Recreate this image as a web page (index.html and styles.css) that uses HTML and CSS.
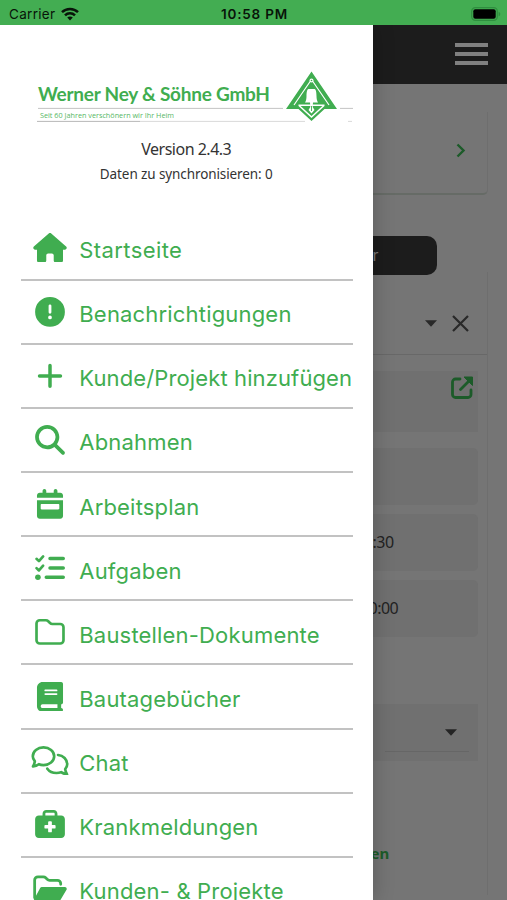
FILE: index.html
```html
<!DOCTYPE html>
<html lang="de">
<head>
<meta charset="utf-8">
<title>Werner Ney &amp; Söhne GmbH</title>
<link rel="stylesheet" href="styles.css">
</head>
<body>
<header class="status">
  <div class="carrier">Carrier
    <svg width="18" height="14" viewBox="0 0 18 14" fill="none" stroke="#081409" stroke-width="2.5"><path d="M1 5.2C5.4.8 12.6.8 17 5.2M4 8.3c2.8-2.8 7.2-2.8 10 0"/><path d="M9 13.4 6.2 10.6c1.6-1.5 4-1.5 5.6 0z" fill="#081409" stroke="none"/></svg>
  </div>
  <div class="clock">10:58 PM</div>
  <div class="power">
    <svg width="30" height="14" viewBox="0 0 30 14"><rect x=".7" y=".7" width="25.6" height="12.6" rx="3.6" fill="none" stroke="#2f8f3f" stroke-width="1.2"/><rect x="2.3" y="2.3" width="22.4" height="9.4" rx="2" fill="#000"/><path d="M27.6 4.7c2.2.8 2.2 3.8 0 4.6z" fill="#2f8f3f"/></svg>
  </div>
</header>
<div class="stage">
  <aside class="drawer">
    <div class="brand">
      <svg width="317" height="54" viewBox="0 0 317 54">
        <path d="M1 37.4h245M303 37.4h13" stroke="#b5b5b5" stroke-width=".8"/>
        <path d="M0 50.4h103" stroke="#a5a5a5" stroke-width=".8"/><path d="M103 50.4h165M311 50.4h4" stroke="#cfcfcf" stroke-width=".8"/>
        <text class="brand-name" x="1" y="30" textLength="232" lengthAdjust="spacing">Werner Ney &amp; Söhne GmbH</text>
        <text class="brand-claim" x="3" y="47" textLength="134" lengthAdjust="spacingAndGlyphs">Seit 60 Jahren verschönern wir Ihr Heim</text>
        <path d="M274.500.500 300 38h-12.500L274.500 50 261.500 38H249z" fill="#40ad50"/>
        <path d="M274.500 8.500 257 34M274.500 8.500 292 34" fill="none" stroke="#fff" stroke-width="1.200"/>
        <path d="M261.500 34.200h26M262 34.500l12.500 11.500L287 34.500" fill="none" stroke="#fff" stroke-width="1.500"/>
        <circle cx="274.500" cy="9.500" r="2" fill="#fff"/><circle cx="274.500" cy="9.500" r=".8" fill="#40ad50"/>
        <path d="M271.500 18h6c1.600 0 2 4 2 7 0 3 .5 5 1.500 6.500h-13c1-1.500 1.500-3.500 1.500-6.500 0-3 .4-7 2-7z" fill="#fff"/>
        <path d="M273 31h3l-.3 5 1.800 3-3 3.500-3-3.500 1.800-3z" fill="#fff"/>
        <path d="M274.500 35v5" stroke="#40ad50" stroke-width=".9"/>
      </svg>
    </div>
    <p class="version">Version 2.4.3</p>
    <p class="sync">Daten zu synchronisieren: 0</p>
    <nav class="menu">
      <a class="item first"><svg class="icon" viewBox="-56 0 688 512"><path d="M575.800 255.500c0 18-15 32.100-32 32.100h-32V472c0 22.100-17.900 40-40 40H392c-22.100 0-40-17.900-40-40v-88c0-17.700-14.300-32-32-32h-64c-17.700 0-32 14.300-32 32v88c0 22.100-17.900 40-40 40h-80c-22.100 0-40-17.900-40-40V287.600H32c-18 0-32-14-32-32.100 0-9 3-17 10-24L266.400 8c7-7 15-8 22-8s15 2 21 7L564.800 231.500c8 7 12 15 11 24z"/></svg><span>Startseite</span></a>
      <a class="item"><svg class="icon" viewBox="-88 0 688 512"><path fill-rule="evenodd" d="M256 512a256 256 0 1 0 0-512 256 256 0 1 0 0 512zm0-384c13.300 0 24 10.700 24 24v112a24 24 0 0 1-48 0V152c0-13.300 10.700-24 24-24zm-32 224a32 32 0 1 1 64 0 32 32 0 1 1-64 0z"/></svg><span>Benachrichtigungen</span></a>
      <a class="item project"><svg class="icon" viewBox="-88 0 688 512"><path d="M256 76v360M76 256h360" fill="none" stroke="currentColor" stroke-width="60" stroke-linecap="round"/></svg><span>Kunde/Projekt hinzufügen</span></a>
      <a class="item"><svg class="icon" viewBox="-88 0 688 512"><path fill-rule="evenodd" d="M416 208c0 45.900-14.900 88.300-40 122.700l126.600 126.700c12.500 12.500 12.500 32.800 0 45.300s-32.800 12.500-45.300 0L330.700 376c-34.400 25.200-76.800 40-122.700 40C93.100 416 0 322.900 0 208S93.100 0 208 0s208 93.100 208 208zM208 352a144 144 0 1 0 0-288 144 144 0 1 0 0 288z"/></svg><span>Abnahmen</span></a>
      <a class="item"><svg class="icon" viewBox="-120 0 688 512"><path fill-rule="evenodd" d="M128 0c17.700 0 32 14.300 32 32v32h128V32c0-17.700 14.300-32 32-32s32 14.300 32 32v32h48c26.500 0 48 21.500 48 48v40H0v-40c0-26.500 21.500-48 48-48h48V32c0-17.700 14.300-32 32-32zM0 192h448v272c0 26.500-21.500 48-48 48H48c-26.500 0-48-21.500-48-48V192zm80 64c-8.800 0-16 7.200-16 16v64c0 8.800 7.200 16 16 16h288c8.800 0 16-7.200 16-16v-64c0-8.800-7.200-16-16-16H80z"/></svg><span>Arbeitsplan</span></a>
      <a class="item"><svg class="icon" viewBox="-88 0 688 512"><g fill="none" stroke="currentColor" stroke-linecap="round" stroke-linejoin="round"><path d="M256 96h228M256 256h228M192 416h292" stroke-width="60"/><path d="m24 100 42 40 72-82M24 260l42 40 72-82" stroke-width="46"/></g><circle cx="48" cy="416" r="48"/></svg><span>Aufgaben</span></a>
      <a class="item"><svg class="icon" viewBox="-88 0 688 512"><path d="M80 56h106c15 0 29 6 40 17l30 30c11 11 25 17 40 17h136c31 0 56 25 56 56v224c0 31-25 56-56 56H80c-31 0-56-25-56-56V112c0-31 25-56 56-56z" fill="none" stroke="currentColor" stroke-width="46"/></svg><span>Baustellen-Dokumente</span></a>
      <a class="item"><svg class="icon" viewBox="-120 0 688 512"><path fill-rule="evenodd" d="M96 0C43 0 0 43 0 96v320c0 53 43 96 96 96h320c17.700 0 32-14.300 32-32s-14.300-32-32-32v-64c17.700 0 32-14.300 32-32V32c0-17.700-14.300-32-32-32H96zm0 384h256v64H96c-17.700 0-32-14.300-32-32s14.300-32 32-32zm32-240c0-8.800 7.200-16 16-16h192a16 16 0 0 1 0 32H144c-8.800 0-16-7.200-16-16zm16 48h192a16 16 0 0 1 0 32H144a16 16 0 0 1 0-32z"/></svg><span>Bautagebücher</span></a>
      <a class="item"><svg class="icon" viewBox="-24 0 688 512"><g fill="none" stroke="currentColor" stroke-width="46" stroke-linejoin="round" stroke-linecap="round"><path d="M59 262c-22-24-35-54-35-86C24 92 106 24 208 24s184 68 184 152-82 152-184 152c-29 0-56-5-80-15-28 21-64 35-101 39 15-24 28-57 32-90z"/><path d="M458 154c91 9 158 78 158 158 0 33-13 62-35 86 4 33 17 66 32 90-37-4-73-18-101-39-24 10-51 15-80 15-67 0-126-29-158-74"/></g></svg><span>Chat</span></a>
      <a class="item"><svg class="icon" viewBox="-88 0 688 512"><path fill-rule="evenodd" d="M128 96V64c0-35 29-64 64-64h128c35 0 64 29 64 64v32h64c35.300 0 64 28.700 64 64v256c0 35.300-28.700 64-64 64H64c-35.300 0-64-28.700-64-64V160c0-35.300 28.700-64 64-64h64zm48 0h160V64c0-8.800-7.200-16-16-16H192c-8.800 0-16 7.200-16 16v32zm48 112v48h-48c-9 0-16 7-16 16v32c0 9 7 16 16 16h48v48c0 9 7 16 16 16h32c9 0 16-7 16-16v-48h48c9 0 16-7 16-16v-32c0-9-7-16-16-16h-48v-48c0-9-7-16-16-16h-32c-9 0-16 7-16 16z"/></svg><span>Krankmeldungen</span></a>
      <a class="item"><svg class="icon" viewBox="-56 0 688 512"><path d="M24 410V104c0-31 25-56 56-56h94c15 0 29 6 40 17l26 26c11 11 25 17 40 17h136c31 0 56 25 56 56v12" fill="none" stroke="currentColor" stroke-width="48" stroke-linecap="round"/><path d="M147 224h397c25 0 40 26 28 48L457 464c-8 10-18 16-30 16H32c-20 0-32-20-22-38l109-202c6-10 16-16 28-16z"/></svg><span>Kunden- &amp; Projekte</span></a>
    </nav>
  </aside>
  <main class="page">
    <div class="topbar"><i></i><i></i><i></i></div>
    <section class="card customer"><svg width="10" height="15" viewBox="0 0 10 15"><path d="m1.500 1.500 6 6-6 6" fill="none" stroke="#1c5b29" stroke-width="2.400"/></svg></section>
    <div class="tab">r</div>
    <section class="card form">
      <div class="select-row">
        <svg width="12" height="7" viewBox="0 0 12 7"><path d="M0 .3h12L6 6.700z" fill="#292929"/></svg>
        <svg width="17" height="17" viewBox="0 0 17 17"><path d="m1 1 15 15M16 1 1 16" stroke="#292929" stroke-width="2.200"/></svg>
      </div>
      <div class="field link"><svg width="23" height="23" viewBox="0 0 23 23"><path d="M9 3H4.500A3 3 0 0 0 1.500 6v12.500a3 3 0 0 0 3 3H17a3 3 0 0 0 3-3V14M9.500 13.500 18.500 4.500" fill="none" stroke="#1c5b29" stroke-width="2.800" stroke-linecap="round"/><path d="M13 1h8.500v8.500z" fill="#1c5b29" stroke="#1c5b29" stroke-linejoin="round"/></svg></div>
      <div class="field empty"></div>
      <div class="field"><span class="time">:30</span></div>
      <div class="field"><span class="time zero">0:00</span></div>
      <div class="field picker"><svg width="12" height="7" viewBox="0 0 12 7"><path d="M0 .3h12L6 6.700z" fill="#242424"/></svg></div>
      <span class="action">en</span>
    </section>
  </main>
</div>
</body>
</html>
```
FILE: styles.css
```css
* { box-sizing: border-box; }
body { margin: 0; width: 507px; height: 900px; overflow: hidden; font-family: Inter, "Liberation Sans", sans-serif; }
.status { display: grid; grid-template-columns: 1fr auto 1fr; align-items: center; height: 25px; padding: 2px 6px 0 9px; background: #43ad52; color: #081409; font-size: 13.500px; }
.carrier { display: flex; align-items: center; gap: 6px; letter-spacing: .3px; }
.clock { margin-left: -1px; font-weight: 600; letter-spacing: .8px; }
.power { display: flex; justify-content: flex-end; }
.stage { display: flex; height: 875px; background: #757575; }
.drawer { flex: none; width: 372.500px; height: 875px; overflow: hidden; background: #fff; box-shadow: 0 0 20px rgba(0,0,0,.22); z-index: 1; clip-path: inset(0 -40px 0 0); }
.brand { height: 54px; margin: 46px 0 0 37px; }
.brand svg { display: block; }
.brand-name { font: 700 19px Lato, sans-serif; fill: #40ad50; }
.brand-claim { font: 400 7px "Open Sans", sans-serif; fill: #56b765; }
.version, .sync { margin: 0; text-align: center; color: #333; font-family: "Noto Sans", sans-serif; }
.version { margin-top: 12px; font-size: 16px; line-height: 24px; letter-spacing: -.5px; }
.sync { margin-top: 2px; font-size: 13.500px; line-height: 22px; letter-spacing: -.1px; }
.menu { margin: 31.400px 19.500px 0 20.500px; }
.item { display: flex; align-items: center; height: 64.150px; padding-left: 9px; border-bottom: 2px solid #c2c2c2; color: #40ad50; font-size: 22px; letter-spacing: .18px; white-space: nowrap; }
.first { letter-spacing: .4px; }
.project { letter-spacing: .12px; }
.icon { flex: none; width: 40px; height: 29.800px; margin-right: 9.800px; fill: currentColor; }
.item span { padding-top: 5px; line-height: 28px; }
.page { flex: 1; min-width: 0; display: flex; flex-direction: column; }
.topbar { flex: none; display: flex; flex-direction: column; align-items: flex-end; gap: 5px; height: 59px; padding: 18px 19px 0 0; background: #1c1c1c; }
.topbar i { width: 33.500px; height: 4px; background: #808080; }
.card { margin-right: 19.500px; border-right: 1px solid #6e6e6e; }
.customer { flex: none; height: 83px; margin-top: 28px; display: flex; align-items: center; justify-content: flex-end; padding: 0 21px 5px 0; border-bottom: 2px solid #666b66; border-radius: 0 0 5px 0; }
.tab { flex: none; width: 64.500px; height: 39px; margin-top: 41px; background: #1c1c1c; border-radius: 0 10px 10px 0; color: #777; font-size: 16px; line-height: 38px; }
.form { flex: none; height: 623px; margin-top: -3px; padding-right: 9px; }
.select-row { display: flex; align-items: center; justify-content: flex-end; gap: 15px; height: 83px; margin-right: -9px; padding: 20px 18px 0 0; border-bottom: 1px solid #686868; }
.field { height: 57px; margin-top: 9px; background: #707070; border-radius: 0 5px 5px 0; color: #222; font: 16px/57px "Noto Sans", sans-serif; }
.link { height: 61px; margin-top: 16px; display: flex; justify-content: flex-end; padding: 5px 4px 0 0; border-radius: 0; }
.empty { margin-top: 16px; }
.time { letter-spacing: -.5px; }
.zero { margin-left: -4px; }
.picker { margin-top: 67px; display: flex; justify-content: flex-end; align-items: center; padding-right: 21px; background: linear-gradient(#666,#666) right 9px bottom 9px / 84px 1px no-repeat #707070; border-radius: 0; }
.action { display: block; margin: 80px 0 0 -2px; color: #1c5b29; font: 700 15px/24px "Noto Sans", sans-serif; }
```
